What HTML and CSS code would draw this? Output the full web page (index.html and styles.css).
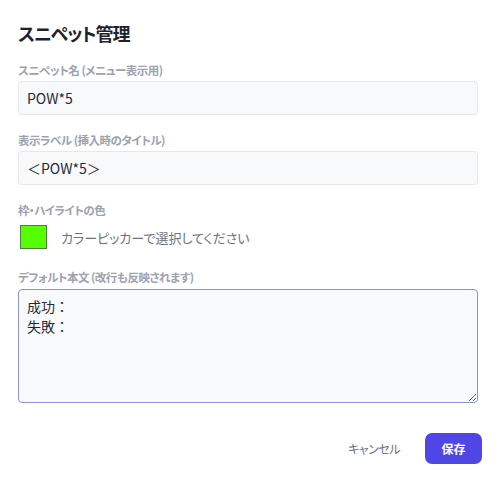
FILE: index.html
```html
<!DOCTYPE html>
<html lang="ja">
<head>
<meta charset="utf-8">
<link rel="stylesheet" href="styles.css">
</head>
<body>
<div class="dialog">
  <h1 class="title">スニペット管理</h1>
  <div class="field">
    <label class="label">スニペット名 (メニュー表示用)</label>
    <div class="input">POW*5</div>
  </div>
  <div class="field">
    <label class="label">表示ラベル (挿入時のタイトル)</label>
    <div class="input">＜POW*5＞</div>
  </div>
  <div class="field">
    <label class="label">枠・ハイライトの色</label>
    <div class="color-row">
      <span class="swatch"></span>
      <span class="hint">カラーピッカーで選択してください</span>
    </div>
  </div>
  <div class="field">
    <label class="label label-ta">デフォルト本文 (改行も反映されます)</label>
    <textarea class="textarea">成功：
失敗：</textarea>
  </div>
  <div class="actions">
    <button class="btn-cancel">キャンセル</button>
    <button class="btn-save">保存</button>
  </div>
</div>
</body>
</html>
```
FILE: styles.css
```css
html, body {
  margin: 0;
  padding: 0;
  background: #ffffff;
}
body {
  font-family: "Noto Sans CJK JP", "Noto Sans", sans-serif;
  color: #1f2937;
}
.dialog {
  padding: 20px 22px 0 18px;
  width: 460px;
}
.title {
  margin: 0 0 15px;
  font-size: 18px;
  font-weight: 700;
  line-height: 26px;
  letter-spacing: -1px;
  font-feature-settings: "palt";
  color: #1e2330;
}
.field {
  display: flex;
  flex-direction: column;
  margin-bottom: 16px;
}
.label {
  font-size: 11.5px;
  font-weight: 700;
  line-height: 18px;
  letter-spacing: -0.5px;
  font-feature-settings: "palt";
  color: #9ca3af;
  margin-bottom: 2px;
}
.label-ta {
  margin-bottom: 3px;
}
.input {
  box-sizing: border-box;
  height: 34px;
  border: 1px solid #e5e7eb;
  border-radius: 4px;
  background: #f8f9fb;
  padding: 0 8px;
  font-size: 14px;
  line-height: 32px;
  color: #1f2937;
}
.color-row {
  display: flex;
  align-items: center;
  gap: 14px;
  padding: 4px 0 3px 2px;
}
.swatch {
  box-sizing: border-box;
  width: 27px;
  height: 24px;
  background: #55ff00;
  border: 1px solid #4f7d3f;
}
.hint {
  font-size: 13px;
  font-feature-settings: "palt";
  color: #6b7280;
}
.textarea {
  box-sizing: border-box;
  width: 460px;
  height: 114px;
  border: 1px solid #8b93d8;
  border-radius: 4px;
  background: #f8f9fb;
  padding: 6px 8px;
  font-family: "Noto Sans CJK JP", "Noto Sans", sans-serif;
  font-size: 14px;
  line-height: 20px;
  color: #1f2937;
  margin: 0;
  outline: none;
}
.actions {
  display: flex;
  justify-content: flex-end;
  align-items: center;
  gap: 25px;
  margin-right: -4px;
  margin-top: 30px;
}
.btn-cancel {
  background: none;
  border: none;
  font-family: inherit;
  font-feature-settings: "palt";
  font-size: 12px;
  font-weight: 400;
  letter-spacing: -0.5px;
  color: #6b7280;
  padding: 0;
}
.btn-save {
  width: 57px;
  height: 31px;
  border: none;
  border-radius: 7px;
  background: #4f46e5;
  color: #ffffff;
  font-family: inherit;
  font-size: 12px;
  font-weight: 700;
}
```
